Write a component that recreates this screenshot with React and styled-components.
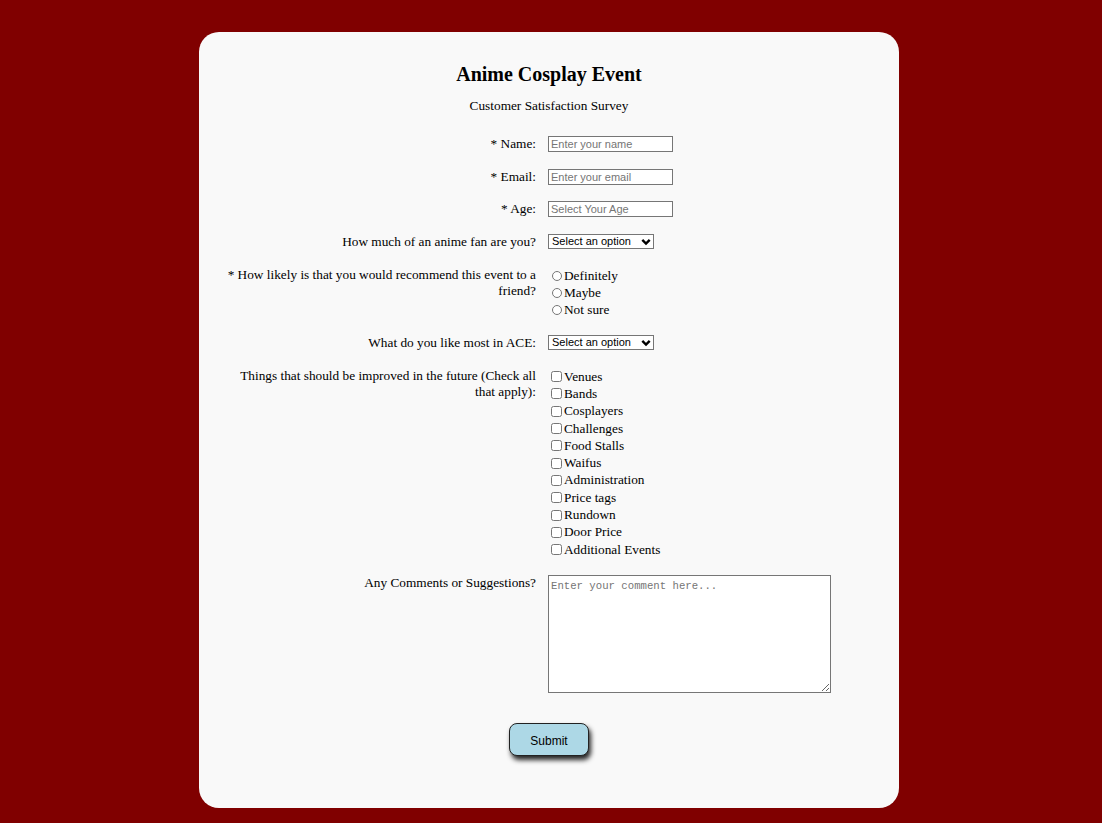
import styled, { createGlobalStyle } from 'styled-components';

const GlobalStyle = createGlobalStyle`
  html, body {
    margin: 0;
    background: #800000;
  }
  body {
    padding: 32px 4px 15px 0;
    font-family: "Liberation Serif", "Times New Roman", serif;
    font-size: 13.3px;
    color: #000;
  }
`;

const improvements = [
  'Venues',
  'Bands',
  'Cosplayers',
  'Challenges',
  'Food Stalls',
  'Waifus',
  'Administration',
  'Price tags',
  'Rundown',
  'Door Price',
  'Additional Events',
];

export default function App() {
  return (
    <>
      <GlobalStyle />
      <Card>
        <Title>Anime Cosplay Event</Title>
        <Subtitle>Customer Satisfaction Survey</Subtitle>
        <Form onSubmit={(e) => e.preventDefault()}>
          <Row>
            <Label htmlFor="name">* Name:</Label>
            <Field>
              <TextInput id="name" type="text" placeholder="Enter your name" />
            </Field>
          </Row>
          <Row>
            <Label htmlFor="email">* Email:</Label>
            <Field>
              <TextInput id="email" type="email" placeholder="Enter your email" />
            </Field>
          </Row>
          <Row>
            <Label htmlFor="age">* Age:</Label>
            <Field>
              <TextInput id="age" type="text" placeholder="Select Your Age" />
            </Field>
          </Row>
          <Row>
            <Label htmlFor="fan">How much of an anime fan are you?</Label>
            <Field>
              <Dropdown id="fan" />
            </Field>
          </Row>
          <Row>
            <Label>* How likely is that you would recommend this event to a friend?</Label>
            <Field>
              {['Definitely', 'Maybe', 'Not sure'].map((opt) => (
                <Option key={opt}>
                  <Radio type="radio" name="recommend" />
                  {opt}
                </Option>
              ))}
            </Field>
          </Row>
          <Row>
            <Label htmlFor="like">What do you like most in ACE:</Label>
            <Field>
              <Dropdown id="like" />
            </Field>
          </Row>
          <Row>
            <Label>Things that should be improved in the future (Check all that apply):</Label>
            <Field>
              {improvements.map((item) => (
                <Option key={item} $tall>
                  <Check type="checkbox" />
                  {item}
                </Option>
              ))}
            </Field>
          </Row>
          <Row>
            <Label htmlFor="comments">Any Comments or Suggestions?</Label>
            <Field>
              <Comments id="comments" placeholder="Enter your comment here..." />
            </Field>
          </Row>
          <SubmitButton type="submit">Submit</SubmitButton>
        </Form>
      </Card>
    </>
  );
}

function Dropdown({ id }) {
  return (
    <SelectWrap>
      <Select id={id} defaultValue="">
        <option value="" disabled>
          Select an option
        </option>
        <option>Option 1</option>
      </Select>
      <Chevron viewBox="0 0 10 10">
        <path d="M1.3 2.8 L5 6.5 L8.7 2.8" fill="none" stroke="#000" strokeWidth="2.4" />
      </Chevron>
    </SelectWrap>
  );
}

const Card = styled.main`
  width: 700px;
  box-sizing: border-box;
  margin: 0 auto;
  padding: 30px 21px 52px;
  background: #f9f9f9;
  border-radius: 20px;
`;

const Title = styled.h2`
  margin: 0;
  text-align: center;
  font-size: 20px;
  line-height: 24px;
  font-weight: bold;
`;

const Subtitle = styled.p`
  margin: 12px 0 22px;
  text-align: center;
  line-height: 16px;
`;

const Form = styled.form`
  display: flex;
  flex-direction: column;
  gap: 16.5px;
`;

const Row = styled.div`
  display: flex;
  align-items: flex-start;
  gap: 12px;
`;

const Label = styled.label`
  width: 316px;
  flex: none;
  text-align: right;
  line-height: 16px;
`;

const Field = styled.div`
  display: flex;
  flex-direction: column;
  align-items: flex-start;
`;

const TextInput = styled.input`
  box-sizing: border-box;
  width: 125px;
  height: 16px;
  margin: 0;
  padding: 0 2px;
  border: 1px solid #767676;
  background: #fff;
  font-family: "Liberation Sans", Arial, sans-serif;
  font-size: 11px;
  &::placeholder {
    color: #757575;
  }
`;

const SelectWrap = styled.div`
  position: relative;
  height: 17px;
  display: flex;
  align-items: flex-start;
`;

const Select = styled.select`
  appearance: none;
  box-sizing: border-box;
  width: 106px;
  height: 15px;
  margin: 0;
  padding: 0 0 0 3px;
  border: 1px solid #767676;
  border-radius: 0;
  background: #fff;
  color: #000;
  font-family: "Liberation Sans", Arial, sans-serif;
  font-size: 11px;
  line-height: 13px;
`;

const Chevron = styled.svg`
  position: absolute;
  right: 3px;
  top: 3px;
  width: 10px;
  height: 10px;
  pointer-events: none;
`;

const Option = styled.label`
  display: flex;
  align-items: center;
  height: ${(p) => (p.$tall ? '17.3px' : '17px')};
  line-height: 16px;
`;

const Radio = styled.input`
  width: 10px;
  height: 10px;
  margin: 0 2px 0 4px;
`;

const Check = styled.input`
  width: 11px;
  height: 11px;
  margin: 0 2px 0 3px;
`;

const Comments = styled.textarea`
  box-sizing: border-box;
  width: 283px;
  height: 118px;
  margin: 0;
  padding: 4px 2px 2px;
  border: 1px solid #767676;
  background: #fff;
  font-family: "Liberation Mono", "Courier New", monospace;
  font-size: 10.67px;
  &::placeholder {
    color: #757575;
  }
`;

const SubmitButton = styled.button`
  align-self: center;
  width: 80px;
  height: 33px;
  margin-top: 13.5px;
  padding: 3px 0 0;
  border: 1px solid #222;
  border-radius: 8px;
  background: #add8e6;
  color: #000;
  font-family: "Liberation Sans", Arial, sans-serif;
  font-size: 12px;
  box-shadow: 2px 4px 5px rgba(0, 0, 0, 0.85);
  cursor: pointer;
`;
